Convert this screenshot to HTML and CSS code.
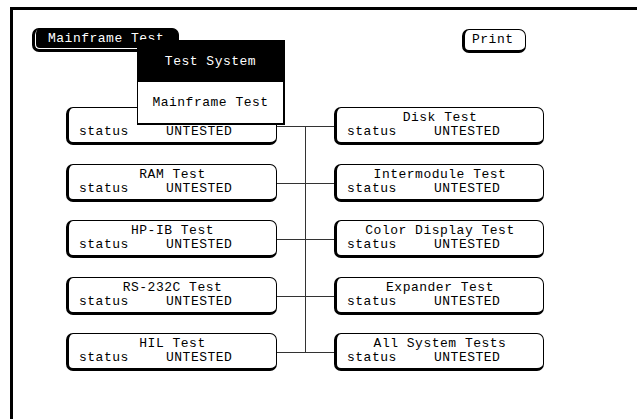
FILE: index.html
```html
<!DOCTYPE html>
<html>
<head>
<meta charset="utf-8">
<link rel="stylesheet" href="styles.css">
</head>
<body>
<div class="frame">
  <div class="toolbar">
    <div class="btn btn-dark">Mainframe Test</div>
    <div class="btn btn-print">Print</div>
  </div>
  <div class="diagram">
    <div class="box"><div class="title">ROM Test</div><div class="status"><span class="label">status</span><span>UNTESTED</span></div></div>
    <div class="link first"></div>
    <div class="box"><div class="title">Disk Test</div><div class="status"><span class="label">status</span><span>UNTESTED</span></div></div>

    <div class="box"><div class="title">RAM Test</div><div class="status"><span class="label">status</span><span>UNTESTED</span></div></div>
    <div class="link mid"></div>
    <div class="box"><div class="title">Intermodule Test</div><div class="status"><span class="label">status</span><span>UNTESTED</span></div></div>

    <div class="box"><div class="title">HP-IB Test</div><div class="status"><span class="label">status</span><span>UNTESTED</span></div></div>
    <div class="link mid"></div>
    <div class="box"><div class="title">Color Display Test</div><div class="status"><span class="label">status</span><span>UNTESTED</span></div></div>

    <div class="box"><div class="title">RS-232C Test</div><div class="status"><span class="label">status</span><span>UNTESTED</span></div></div>
    <div class="link mid"></div>
    <div class="box"><div class="title">Expander Test</div><div class="status"><span class="label">status</span><span>UNTESTED</span></div></div>

    <div class="box"><div class="title">HIL Test</div><div class="status"><span class="label">status</span><span>UNTESTED</span></div></div>
    <div class="link last"></div>
    <div class="box"><div class="title">All System Tests</div><div class="status"><span class="label">status</span><span>UNTESTED</span></div></div>
  </div>
  <div class="menu">
    <div class="menu-item selected">Test System</div>
    <div class="menu-item">Mainframe Test</div>
  </div>
</div>
</body>
</html>
```

FILE: styles.css
```css
html, body {
  margin: 0;
  padding: 0;
  background: #fff;
}
body {
  font-family: "Liberation Mono", "DejaVu Sans Mono", monospace;
  font-size: 13px;
  letter-spacing: 0.5px;
  color: #000;
  padding: 7px 0 0 10px;
  height: 419px;
  box-sizing: border-box;
  overflow: hidden;
}
.frame {
  position: relative;
  border-top: 3px solid #000;
  border-left: 3px solid #000;
  height: 100%;
  box-sizing: border-box;
}
.toolbar {
  display: flex;
  align-items: flex-start;
  padding: 18px 0 0 19px;
}
.btn {
  box-sizing: border-box;
  height: 24px;
  border: 1px solid #000;
  border-left-width: 3px;
  border-bottom-width: 3px;
  border-radius: 7px;
  display: flex;
  align-items: center;
  line-height: 14px;
  padding-bottom: 1px;
}
.btn-dark {
  width: 147px;
  background: #000;
  color: #fff;
  padding-left: 13px;
  box-shadow: inset 1px -1px 0 #fff;
}
.btn-print {
  width: 64px;
  margin: 1px 0 0 283px;
  padding-left: 7px;
}
.diagram {
  display: grid;
  grid-template-columns: 211px 57px 210px;
  grid-template-rows: 57px 56px 57px 56px 38px;
  margin: 54px 0 0 53px;
}
.box {
  box-sizing: border-box;
  height: 38px;
  border: 1px solid #000;
  border-left-width: 3px;
  border-bottom-width: 3px;
  border-radius: 7px;
  padding-top: 3px;
  line-height: 14px;
}
.title {
  text-align: center;
}
.status {
  display: flex;
  padding-left: 10px;
}
.label {
  width: 87px;
}
.link {
  position: relative;
}
.link::before {
  content: "";
  position: absolute;
  left: 0;
  right: 0;
  top: 19px;
  height: 1px;
  background: #333;
}
.link::after {
  content: "";
  position: absolute;
  left: 28px;
  width: 1px;
  background: #333;
}
.link.first::after { top: 19px; bottom: 0; }
.link.mid::after { top: 0; bottom: 0; }
.link.last::after { top: 0; height: 20px; }
.menu {
  position: absolute;
  left: 124px;
  top: 30px;
  width: 148px;
  box-sizing: border-box;
  border: 1px solid #000;
  border-right-width: 2px;
  border-bottom-width: 2px;
  background: #fff;
}
.menu-item {
  height: 41px;
  display: flex;
  align-items: center;
  justify-content: center;
  line-height: 14px;
}
.menu-item.selected {
  background: #000;
  color: #fff;
}
```
